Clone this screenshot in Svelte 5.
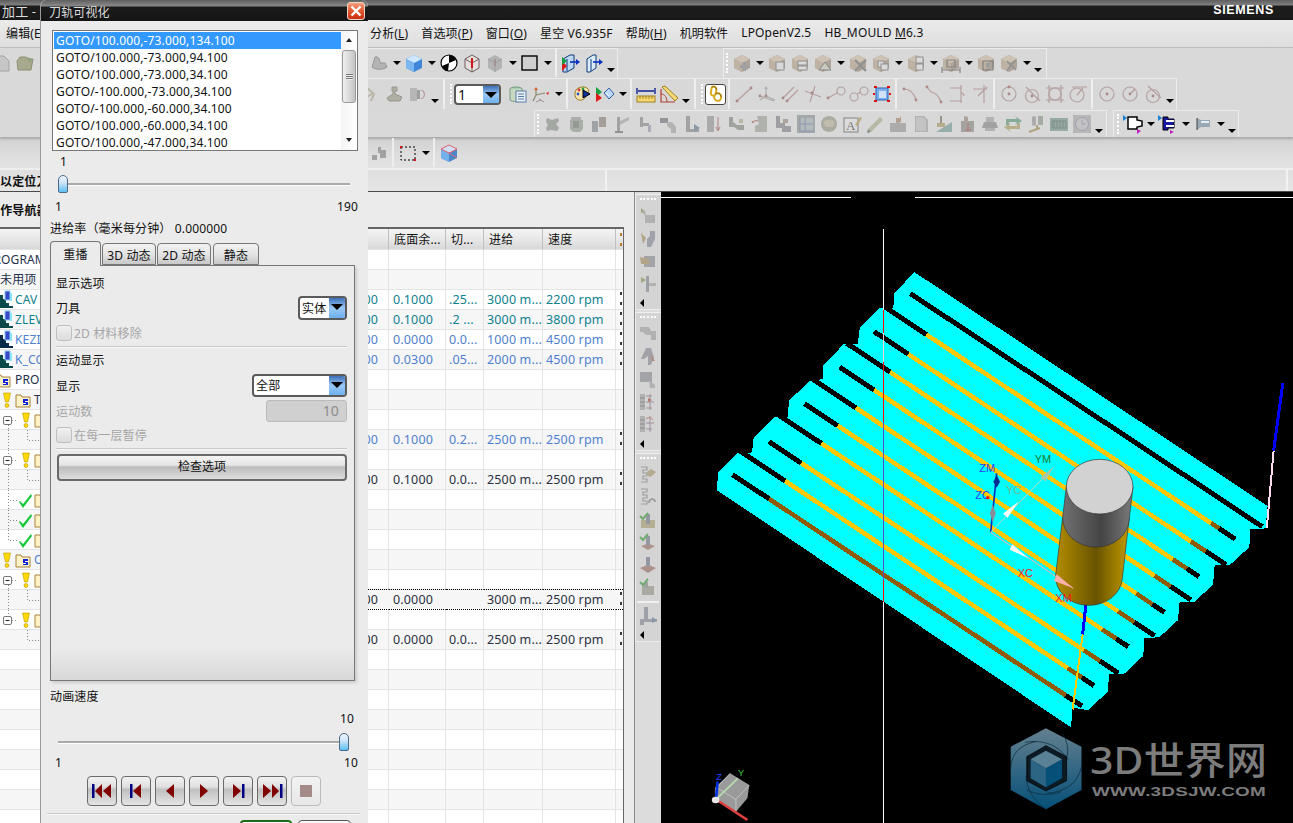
<script>
  const gray = (d, f = "#8e8e8e") => `<path d="${d}" fill="${f}"/>`;
  const cube = (t, l, r) =>
    `<path d="M10 2l8 4v9l-8 4-8-4V6z" fill="${r}"/><path d="M2 6l8-4 8 4-8 4z" fill="${t}"/><path d="M2 6l8 4v9l-8-4z" fill="${l}"/>`;
  const tan = (over) => cube("#c9baa6", "#b5a48e", "#9f9080") + over;
  const dot = (x, y) => `<circle cx="${x}" cy="${y}" r="1.4" fill="#9c6c6c"/>`;
  const ln = (d) => `<path d="${d}" fill="none" stroke="#a98a8a" stroke-width="1.2"/>`;
  const circ = (cx, cy, r) => `<circle cx="${cx}" cy="${cy}" r="${r}" fill="none" stroke="#a89090" stroke-width="1.2"/>`;

  const I = {
    doc: `<path d="M3 3h9l5 5v10H3z" fill="#c6c6c6" stroke="#a4a4a4"/>`,
    folder: `<path d="M2 8l3-4h6l2 2h5l-2 11H3z" fill="#a9a98e" stroke="#8e8e76"/><path d="M12 4l5 2-2 4z" fill="#8fa080"/>`,
    bowl: `<path d="M6 4c4-1 5 3 5 6h5l2 4c-3 3-12 3-15 0l1-3z" fill="#a6a6a6" stroke="#7d7d7d"/>`,
    bluecube: cube("#cfe8ff", "#7ab6f0", "#3f86d8"),
    sphere: `<circle cx="10" cy="10" r="8" fill="#fff" stroke="#000" stroke-width="1.2"/><path d="M10 2a8 8 0 0 1 7 5l-7 3-1 8a8 8 0 0 1-6-5l7-3z" fill="#000"/>`,
    redcube: `<path d="M10 2l7 4v9l-7 4-7-4V6z" fill="#e6dede" stroke="#6f5f5f"/><path d="M3 6l7 4 7-4M10 10v9" fill="none" stroke="#6f5f5f"/><path d="M9 5h2v10H9z" fill="#d01818"/>`,
    greycube: `<path d="M10 2l7 4v9l-7 4-7-4V6z" fill="#a6a6a6"/><path d="M10 10v9M3 6l7 4 7-4" fill="none" stroke="#8a8a8a"/><path d="M9 6h2v7H9z" fill="#8f7a7a"/>`,
    square: `<rect x="2" y="3" width="15" height="14" fill="#cfcfcf" stroke="#000" stroke-width="1.4"/>`,
    ca: `<path d="M2 6l7-4h4v13l-7 4H2z" fill="#bcd8f4" stroke="#0a3a7a"/><path d="M6 6v12" stroke="#0a3a7a"/><path d="M1 8l5 5-5 5z" fill="#e01818"/><path d="M1 4l5 4-5 4z" fill="#12a040"/><path d="M9 9h7" stroke="#0030c0" stroke-width="1.6"/><path d="M15 6l4 3-4 3z" fill="#0030c0"/>`,
    cb: `<path d="M3 6l6-4h3v13l-6 4H3z" fill="#dcecfb" stroke="#0a3a7a"/><path d="M7 6v12" stroke="#0a3a7a"/><path d="M9 9h7" stroke="#0030c0" stroke-width="1.6"/><path d="M15 6l4 3-4 3z" fill="#0030c0"/>`,
    t1: tan(`<path d="M11 9h3v3h3v3h-3v3h-3v-3H8v-3h3z" fill="#8c8c8c"/>`),
    t2: tan(`<rect x="9" y="9" width="8" height="8" fill="#d8d8d8" stroke="#777"/>`),
    t3: tan(`<rect x="8" y="8" width="9" height="4" fill="#ddd" stroke="#777"/><rect x="8" y="13" width="9" height="4" fill="#ddd" stroke="#777"/>`),
    t4: tan(`<path d="M12 9l6 8H6z" fill="#c4c4b4" stroke="#666"/>`),
    t5: tan(`<path d="M7 7l11 11M18 7L7 18" stroke="#777" stroke-width="2.4"/>`),
    t6: tan(`<rect x="7" y="8" width="6" height="6" fill="#ddd" stroke="#777"/><rect x="10" y="11" width="7" height="6" fill="#ddd" stroke="#777"/>`),
    t7: tan(`<rect x="10" y="4" width="7" height="6" fill="#ddd" stroke="#777"/><rect x="10" y="11" width="7" height="6" fill="#ddd" stroke="#777"/>`),
    t8: tan(`<path d="M1 17h18M1 14v6M19 14v6M6 7h8v7H6z" fill="none" stroke="#666" stroke-width="1.2"/>`),
    t9: tan(`<rect x="7" y="8" width="10" height="9" fill="none" stroke="#555"/><rect x="10" y="10" width="4" height="4" fill="#888"/>`),
    t10: tan(`<path d="M8 8l9 9M8 18l4-6 5-5" stroke="#777" stroke-width="1.6" fill="none"/>`),
    h1: `<path d="M5 4l7 6-3 7M3 14l7-4" fill="none" stroke="#b0a898" stroke-width="2"/>`,
    h2: `<path d="M7 3h5v4h-2v3l7 3-2 4H4l-2-3 6-4V7H7z" fill="#a0a090" stroke="#807f76"/>`,
    h3: `<rect x="2" y="4" width="7" height="13" fill="#a9a9a9"/><rect x="9" y="6" width="3" height="9" fill="#888"/><path d="M13 6c4 1 5 7 0 9" fill="none" stroke="#a88" stroke-width="1.2"/>`,
    layers: `<ellipse cx="8" cy="5" rx="6" ry="2" fill="#a8d4b4" stroke="#6a9a7a"/><path d="M2 5v11c2 2 10 2 12 0V5" fill="#c8d8c0" stroke="#7a9a8a"/><rect x="8" y="7" width="10" height="11" fill="#e8f0f8" stroke="#5878a8"/><path d="M10 10h6M10 12.500h6M10 15h6" stroke="#5878a8"/>`,
    wcs: `<path d="M5 11V4M5 11l-3 6M5 11l9-2" stroke="#8a8a70" stroke-width="1.2" fill="none"/><path d="M5 3l-2 3h4z" fill="#e06020"/><path d="M15 9l3-1-1 3z" fill="#e02020"/><path d="M8 15l5 3M5 18l5-2" stroke="#a09090"/>`,
    palette: `<path d="M3 9c0-6 10-8 13-4 2 3-1 4-2 7-1 4-7 6-10 2-1-1-1-3-1-5z" fill="#f4e6b0" stroke="#987a20"/><circle cx="7" cy="6" r="1.400" fill="#e03030"/><circle cx="11" cy="5" r="1.400" fill="#30a040"/><circle cx="6" cy="10" r="1.400" fill="#3050d0"/><path d="M11 6l7 4-7 4z" fill="#1030a0" stroke="#000"/>`,
    viewset: `<path d="M9 9l5-5 5 6-5 5z" fill="#bcd8f4" stroke="#3060a8"/><path d="M1 3l6 5-6 5z" fill="#18a040"/><path d="M1 9l6 5-6 4z" fill="#e01818"/><path d="M11 9l3 3" stroke="#fff"/>`,
    ruler: `<path d="M1 4v6M19 4v6M2 7h16" stroke="#102090" stroke-width="1.4" fill="none"/><rect x="1" y="12" width="18" height="6" fill="#f6d870" stroke="#a08020"/><path d="M4 12v3M7 12v3M10 12v3M13 12v3M16 12v3" stroke="#a08020"/>`,
    angle: `<path d="M2 5v13h14" fill="none" stroke="#b04030" stroke-width="1.2"/><path d="M2 10c4 0 6 4 6 8" fill="none" stroke="#b04030"/><path d="M3 3l3-1 13 12-3 3z" fill="#f4d878" stroke="#a08020"/>`,
    l1: ln("M3 17L17 4") + dot(3, 17) + dot(17, 4),
    l2: `<path d="M9 3v9M9 12l9 4M9 12l-6 4M3 12l14 5" fill="none" stroke="#a09a9a" stroke-width="1.2"/><path d="M9 2l-2 3h4z" fill="#a0a0a0"/>` + dot(9, 12) + dot(3, 12),
    l3: ln("M3 14L14 3M7 17L18 6") + dot(3, 14) + dot(7, 17),
    l4: ln("M2 7l16 6M12 2L7 18") + dot(9, 9),
    l5: ln("M2 14l9-5") + circ(15, 7, 4) + dot(2, 14),
    l6: circ(5, 13, 4) + circ(15, 7, 4) + ln("M8 10l4-2"),
    l7: `<rect x="4" y="4" width="12" height="12" fill="#7ab0f0" stroke="#3060b0"/><rect x="7" y="7" width="7" height="7" fill="#cfe2f8"/><path d="M2 3h3M15 3h3M2 17h3M15 17h3M1 10h2M17 10h2" stroke="#e01010" stroke-width="1.800"/>`,
    a1: ln("M3 5c6 0 10 4 12 11") + dot(3, 5) + dot(15, 16),
    a2: ln("M3 3l4 5c5 1 8 4 10 10") + dot(3, 3) + dot(17, 18),
    a3: ln("M3 4h12M3 17h12M14 1v18M14 9c2 0 3 1 3 3"),
    a4: ln("M3 5h14M14 1v18M8 12l9-9"),
    c1: circ(10, 10, 7) + dot(10, 10) + dot(10, 3),
    c2: circ(10, 12, 6.500) + dot(10, 12) + ln("M4 3l14 14"),
    c3: ln("M1 4h18M1 16h18M4 1v18M16 1v18") + circ(10, 10, 6),
    c4: circ(9, 11, 7) + ln("M9 11l6-7M4 3h15"),
    c5: circ(10, 10, 7) + dot(10, 10),
    c6: circ(10, 10, 7) + dot(10, 10) + ln("M10 10l5-5"),
    c7: circ(10, 12, 6.500) + dot(10, 12) + ln("M5 2l13 12"),
    r1: gray("M4 4l5 2 6-2 1 3-3 3 3 4-2 3-6-1-4 1-1-3 2-3-2-3z", "#8f9690"),
    r2: gray("M5 3h10v3h2v9l-3 3H7l-3-3V6h1z", "#98a096") + gray("M7 7h6v7H7z", "#7c827a"),
    r3: gray("M3 7h6v11H3z", "#8a8f96") + gray("M10 3h7v10h-7z", "#8f8a80"),
    r4: gray("M5 3h3v15H5z") + gray("M8 7l9-4v3l-9 5z", "#a8a8a8") + gray("M3 17h8v2H3z", "#777"),
    r5: gray("M5 3h3v10H5zM8 9h6v3H8z") + gray("M13 11h3v7h-3z", "#9aa0a8"),
    r6: gray("M2 4h8v5H2z", "#7c7c84") + gray("M9 8h5l4 5v6h-5v-4l-4-3z", "#a6a6a6"),
    r7: gray("M5 2h4v13h9v3H5z") + gray("M13 10l6 4-6 4z", "#6f7f90"),
    r8: gray("M3 2h7v16H3z", "#999") + gray("M3 6l7-4M3 12l7-6M3 18l7-6", "#777") + `<path d="M14 3v13M12 13l2 4 2-4" stroke="#a06060" fill="none"/>`,
    r9: gray("M2 3h4v5l4 3h7v5h-6l-4-3H2z", "#8a8f88") + gray("M12 5h4v4h-4z", "#b0a898"),
    r10: gray("M7 2h10v16H5v-6l4-2z", "#a0a49c") + `<path d="M3 9c0-2 3-3 5-2M3 9l-1-2" stroke="#a05040" fill="none"/>`,
    r11: gray("M3 2h4v7h5v3h6v6H9v-4H3z", "#8a8a90") + gray("M10 5h5v4h-5z", "#9a8f86"),
    r12: gray("M1 1h18v18H1z", "#8f9696") + gray("M4 4h13v13H4z", "#a8b0b4") + `<path d="M4 4v13h13M9 4v13M4 10h13" stroke="#7480a0" fill="none"/>`,
    r13: `<circle cx="10" cy="10" r="8" fill="#9a9a8e"/><path d="M4 8c3-3 10-3 12 0l-2 5H7z" fill="#b8b09c"/>`,
    r14: `<rect x="2" y="4" width="14" height="14" fill="#dedede" stroke="#666"/><text x="4" y="16" font-size="13" font-family="Liberation Serif" fill="#555">A</text><path d="M13 11l5-8 2 1-5 8z" fill="#b09a60"/>`,
    r15: gray("M3 15L15 3l3 3L6 18z", "#a8ac90") + gray("M3 15l3 3-4 1z", "#607068"),
    r16: gray("M2 9h6V4h4v5h6v9H2z", "#9c9c9c") + gray("M8 4h4l1-2v6H8z", "#a88870"),
    r17: gray("M4 2h9l4 4v12H4z", "#a4a4a4") + gray("M5 3h7l3 3v11H5z", "#bcbcbc"),
    r18: gray("M2 18L18 8v10z", "#7fa09a") + gray("M6 2h2v7H6z", "#80786c") + gray("M3 9h8v4H3z", "#a89c6c"),
    r19: gray("M4 7h13v11H4z", "#8f8f8a") + gray("M7 2l4 1v5H7z", "#9c9080") + `<path d="M11 9v7M8 16h6" stroke="#b05050"/>`,
    r20: gray("M4 8h12l2 6H2z", "#8c8c8c") + gray("M6 3h8v5H6zM5 14h10v3H5z", "#a4a4a4"),
    r21: gray("M3 5h11l-2-3 7 5-7 4 2-3H6v3H3z", "#6a9a80") + gray("M17 15H6l2 3-7-5 7-4-2 3h8V9h3z", "#a8a070"),
    r22: `<rect x="6" y="2" width="4" height="10" fill="#9a9a9a" rx="2"/><rect x="12" y="2" width="5" height="9" fill="#8f9a8f"/><path d="M3 18l11-4M11 11v4" stroke="#a09060" stroke-width="2"/>`,
    r23: `<rect x="1" y="4" width="18" height="13" fill="#7e9a90"/><path d="M3 7h14v7H3zM5 7v7M8 7v7M11 7v7M14 7v7" stroke="#5c7068" fill="none"/>`,
    r24: `<rect x="1" y="1" width="18" height="18" fill="#a9a9a9"/><circle cx="10" cy="10" r="6.500" fill="#bbb" stroke="#8a8ca8"/><path d="M10 6v4h4" stroke="#8a8ca8" fill="none"/>`,
    sw1: `<path d="M5 3h9v3l5 1v5l-5 1v2H5z" fill="#fff" stroke="#000" stroke-width="1.500"/><path d="M0 1l4 3-4 3z" fill="#1a80d0"/><path d="M14 15l4 2-4 3z" fill="#c020c0"/>`,
    sw2: `<path d="M5 3h5v2h6v9h-6v2H5z" fill="#1818a0" stroke="#000"/><path d="M8 6h8v2H8zM8 11h8v2H8z" fill="#fff"/><path d="M0 1l4 3-4 3z" fill="#1a80d0"/><path d="M12 16l4 2-4 2z" fill="#c020c0"/>`,
    sw3: `<path d="M4 4l4 2h9v7H8l-4 3z" fill="#9aa8b4"/><path d="M8 7h8v2H8z" fill="#e4ecf4"/><path d="M4 4v12" stroke="#444"/>`,
    r4a: gray("M3 12h5v5H3zM9 4h3v3h5v8h-6v-5H9z", "#8c8c8c"),
    marq: `<rect x="3" y="4" width="14" height="13" fill="none" stroke="#000" stroke-dasharray="2 2"/><rect x="2" y="3" width="2" height="2" fill="#e01010"/><rect x="16" y="16" width="2" height="2" fill="#e01010"/>`,
    hcube: cube("#cfe2f6", "#74b0ea", "#4a88cc") + `<path d="M10 2l8 4-8 4-8-4zM10 10l8 5" fill="none" stroke="#e86070"/>`,
    p1: gray("M3 3l4 2 1 4h9v8H7V9L3 6z", "#a4a4a4") + gray("M3 2l3 3-3 2z", "#8a9460"),
    p2: gray("M12 2h5v8l-4 8H9V10l3-3z", "#8c9098") + gray("M3 4l5 5-3 6z", "#a09468"),
    p3: gray("M6 5h11v11H6z", "#8f9298") + gray("M2 6l9 2v5H3z", "#a8946c"),
    p4: gray("M8 2h3v16H8z", "#8a8e96") + gray("M11 9h7v3h-7z", "#a6a6a6") + gray("M3 3l5 3-5 3z", "#8f9a60"),
    p5: gray("M2 3h9l2 4h5v9h-5v-5H8L5 8H2z", "#a4a4a4"),
    p6: gray("M8 1h5l3 9-3 8h-3V9L6 12H3z", "#8f9098") + gray("M13 8l4 6h-3z", "#a46a5a"),
    p7: gray("M2 3h12v10H2z", "#8f9298") + gray("M11 11l6 5v3h-5z", "#a6a6a6"),
    p8: `<path d="M2 2h5v16H2z" fill="#a4a4a4"/><path d="M2 6h5M2 10h5M2 14h5" stroke="#777"/><path d="M8 4h6M8 10h8M8 16h6M12 2v16" stroke="#8a7a8a" fill="none"/><path d="M10 6l4 2-4 2z" fill="#b05a40"/>`,
    p9: `<path d="M2 2h5v16H2z" fill="#a4a4a4"/><path d="M2 6h5M2 10h5M2 14h5" stroke="#777"/><path d="M12 2v16M8 9h8M8 15h6" stroke="#8a7a8a" fill="none"/><path d="M8 5c2-2 5-2 7 1" stroke="#b05a40" fill="none"/>`,
    p10: `<path d="M3 2h6v3H5v3h4v3H5v3h4v3H3" fill="none" stroke="#8a8a8a" stroke-width="1.200"/>` + gray("M9 7l4-3 5 3-3 3-3 2-3-2z", "#a89a78"),
    p11: `<path d="M3 2h6v3H5v3h4v3H5v3h4v3H3" fill="none" stroke="#8a8a8a" stroke-width="1.200"/><path d="M11 16c0-5 6-5 6-1" fill="none" stroke="#888" stroke-width="1.800"/>`,
    p12: gray("M3 10h14v8H3z", "#a8a27c") + gray("M8 4h4v10H8z", "#7c8290") + `<path d="M2 6l3 3 5-6" stroke="#4c9a4c" stroke-width="2" fill="none"/>`,
    p13: gray("M3 14l6-2h2l6 2-7 4z", "#9c7a70") + gray("M8 4h4v9H8z", "#7c8290") + `<path d="M2 5l3 3 5-6" stroke="#4c9a4c" stroke-width="2" fill="none"/>`,
    p14: gray("M2 13l7-3h2l7 3-8 5z", "#9c7a70") + gray("M8 2h4v9H8z", "#7c8290"),
    p15: gray("M4 9h12v9H4z", "#9a9a90") + gray("M6 5h4v6H6z", "#8f8f8f") + `<path d="M2 5l3 3 5-6" stroke="#4c9a4c" stroke-width="2" fill="none"/>`,
    p16: gray("M6 1h4v12h9v3H6zM2 13h4v6H2z", "#8a8e96") + gray("M14 11l5 3-5 3z", "#6f7f98"),
  };

  // disabled commands in the reference read washed out
  const faint = (t) => /^(t|r|p|a|c|h)\d+$/.test(t) || /^l[1-6]$/.test(t) || t === "bowl" || t === "greycube" || t === "r4a";

  const toolbars = [
    { cls: "r1", groups: [
      { cls: "bare", items: "doc folder" },
      { cls: "g1", items: "bowl v bluecube v sphere redcube greycube v square v | ca cb vs" },
      { cls: "g2", items: ": t1 v t2 t3 t4 v t5 t6 v t7 v t8 v t9 t10 v vs" },
    ] },
    { cls: "r2", groups: [
      { cls: "g3", items: "h1 h2 h3 vs | : combo layers wcs v | palette viewset v | ruler angle vs | : tog | l1 l2 l3 l4 l5 l6 l7 | a1 a2 a3 a4 | c1 c2 c3 c4 | c5 c6 c7 vs" },
    ] },
    { cls: "r3", groups: [
      { cls: "g4", items: ": r1 r2 r3 r4 r5 r6 r7 r8 r9 r10 r11 r12 r13 r14 r15 r16 r17 r18 r19 r20 r21 r22 r23 r24 vs" },
      { cls: "g5", items: ": sw1 v sw2 v sw3 v vs" },
    ] },
    { cls: "r4", groups: [{ cls: "g6", items: "r4a | marq v | hcube" }] },
  ];

  const palette = [
    { cls: "p-a", items: ": p1 p2 p3 p4 <" },
    { cls: "p-b", items: ": p5 p6 p7 p8 p9 <" },
    { cls: "p-c", items: ": p10 p11 p12 p13 p14 p15 - p16 <" },
  ];

  const menus = [
    { t: "分析(", u: "L", e: ")" },
    { t: "首选项(", u: "P", e: ")" },
    { t: "窗口(", u: "O", e: ")" },
    { t: "星空 V6.935F" },
    { t: "帮助(", u: "H", e: ")" },
    { t: "机明软件" },
    { t: "LPOpenV2.5" },
    { t: "HB_MOULD ", u: "M", e: "6.3" },
  ];

  // tree column pieces, everything right of x=40 sits under the dialog
  const warn = (x) => `<path d="M${x - 3.5} 3h7l-2 9h-3z" fill="#ffd800" stroke="#b89a00" stroke-width=".6"/><circle cx="${x}" cy="15.500" r="2" fill="#ffd800" stroke="#b89a00" stroke-width=".6"/>`;
  const fold = (x) => `<path d="M${x} 5h5l1 2h8v10H${x}z" fill="#fdf2c4" stroke="#a8843c"/><path d="M${x + 7} 9h5v2h-3v1h3v3h-5v-1h3v-1H${x + 7}z" fill="#1420e0"/>`;
  const minus = (x) => `<rect x="${x - 3.500}" y="6.500" width="8" height="8" rx="1.500" fill="#fff" stroke="#777"/><path d="M${x - 1.500} 10.500h4" stroke="#222"/><path d="M${x + 5} 10.500h5" stroke="#999" stroke-dasharray="1 2"/>`;
  const elbow = (x, to) => `<path d="M${x + .5} 0v10.500H${to}" fill="none" stroke="#888" stroke-dasharray="1 2"/>`;
  const spine = `<path d="M8.500 0v20" stroke="#888" stroke-dasharray="1 2"/>`;
  const check = (x) => `<path d="M${x} 11l3 3 8-10 1 2-9 12-4-6z" fill="#18c838"/>`;
  const op = (c) => `<path d="M0 5h3v4h3v4h3v3h4v2H0z" fill="${c}"/><rect x="5" y="1" width="5" height="9" fill="#3848c8" stroke="#88c8f0"/><path d="M10 3h2v8h-2z" fill="#88e8ff"/>`;
  const txt = (x, s, c) => `<text x="${x}" y="14" fill="${c}">${s}</text>`;
  const TEAL = "#0f7f90", BLUE = "#4f7fd0", DARK = "#26304a";

  const rows = [
    { tree: txt(-14, "PROGRAM", DARK) },
    { tree: txt(0, "未用项", DARK) },
    { tree: op("#0a4a4a") + txt(15, "CAV", TEAL), vals: ["00", "0.1000", ".25...", "3000 m...", "2200 rpm"], c: "teal" },
    { tree: op("#0a4a4a") + txt(15, "ZLEV", TEAL), vals: ["00", "0.1000", ".2 ...", "3000 m...", "3800 rpm"], c: "teal" },
    { tree: op("#0a2a4a") + txt(15, "KEZI", BLUE), vals: ["00", "0.0000", "0.0...", "1000 m...", "4500 rpm"], c: "blue" },
    { tree: op("#0a4a4a") + txt(15, "K_CO", BLUE), vals: ["00", "0.0300", ".05...", "2000 m...", "4500 rpm"], c: "blue" },
    { tree: fold(-4) + txt(15, "PRO", DARK) },
    { tree: warn(7) + fold(16) + txt(34, "T", DARK) },
    { tree: minus(7) + warn(26) + fold(35) + `<path d="M8.500 15v5" stroke="#888" stroke-dasharray="1 2"/>` },
    { tree: spine + elbow(27, 40), vals: ["00", "0.1000", "0.2...", "2500 m...", "2500 rpm"], c: "blue" },
    { tree: minus(7) + warn(26) + fold(35) + `<path d="M8.500 0v6M8.500 15v5" stroke="#888" stroke-dasharray="1 2"/>` },
    { tree: spine + elbow(27, 40), vals: ["00", "0.1000", "0.0...", "2500 m...", "2500 rpm"], c: "dark" },
    { tree: elbow(8, 18) + spine + check(20) + fold(35) },
    { tree: spine + check(20) + fold(35) + elbow(8, 18) },
    { tree: elbow(8, 18) + check(20) + fold(35) },
    { tree: warn(7) + fold(16) + txt(34, "O", BLUE) },
    { tree: minus(7) + warn(26) + fold(35) + `<path d="M8.500 15v5" stroke="#888" stroke-dasharray="1 2"/>` },
    { tree: spine + elbow(27, 40), vals: ["00", "0.0000", "", "3000 m...", "2500 rpm"], c: "dark", sel: true },
    { tree: minus(7) + warn(26) + fold(35) + `<path d="M8.500 0v6" stroke="#888" stroke-dasharray="1 2"/>` },
    { tree: elbow(27, 40), vals: ["00", "0.0000", "0.0...", "2500 m...", "2500 rpm"], c: "dark" },
    ...Array.from({ length: 10 }, () => ({ tree: "" })),
  ];

  const gotos = [
    "GOTO/100.000,-73.000,134.100",
    "GOTO/100.000,-73.000,94.100",
    "GOTO/100.000,-73.000,34.100",
    "GOTO/-100.000,-73.000,34.100",
    "GOTO/-100.000,-60.000,34.100",
    "GOTO/100.000,-60.000,34.100",
    "GOTO/100.000,-47.000,34.100",
  ];

  const tabs = ["重播", "3D 动态", "2D 动态", "静态"];

  const transport = [
    `<path d="M5 8h2.500v14H5z" fill="#000080"/><path d="M15 8v14l-7-7zM24 8v14l-8-7z" fill="#800000"/>`,
    `<path d="M9 8h2.500v14H9z" fill="#000080"/><path d="M20 8v14l-8-7z" fill="#800000"/>`,
    `<path d="M19 8v14l-8-7z" fill="#800000"/>`,
    `<path d="M11 8v14l8-7z" fill="#800000"/>`,
    `<path d="M10 8v14l8-7z" fill="#800000"/><path d="M19 8h2.500v14H19z" fill="#000080"/>`,
    `<path d="M6 8v14l8-7zM15 8v14l7-7z" fill="#800000"/><path d="M23 8h2.500v14H23z" fill="#000080"/>`,
    `<rect x="9" y="9" width="12" height="12" fill="#a58a8a"/>`,
  ];

  // toolpath drawn in the coordinates of the reference crop, see the group transform
  const SLOPE = 0.749;
  const K = "#000", O = "#ffc800", B = "#8f5a00";
  const cuts = [
    [620, 290, [[620, 1492, K]]],
    [660, 405, [[548, 660, K], [660, 1365, O], [1365, 1385, B], [1385, 1425, K]]],
    [615, 460, [[530, 615, K], [615, 1315, O], [1315, 1352, B], [1352, 1402, K]]],
    [570, 510, [[462, 570, K], [570, 1270, O], [1270, 1305, B], [1305, 1335, K]]],
    [530, 560, [[445, 530, K], [530, 1225, O], [1225, 1265, B], [1265, 1315, K]]],
    [485, 610, [[375, 485, K], [485, 1180, O], [1180, 1220, B], [1220, 1250, K]]],
    [440, 660, [[358, 440, K], [440, 1135, O], [1135, 1175, B], [1175, 1225, K]]],
    [400, 710, [[290, 400, K], [400, 1095, O], [1095, 1130, B], [1130, 1160, K]]],
    [350, 765, [[270, 350, K], [350, 1050, O], [1050, 1090, B], [1090, 1135, K]]],
    [310, 815, [[198, 310, K], [310, 1010, O], [1010, 1045, B], [1045, 1075, K]]],
    [270, 865, [[180, 270, K], [270, 1005, B], [1005, 1045, K]]],
  ].flatMap(([x0, y0, segs]) =>
    segs.map(([a, b, c]) => ({
      x1: a, y1: y0 + (a - x0) * SLOPE, x2: b, y2: y0 + (b - x0) * SLOPE, c,
      w: c === K ? 5 : 4.6,
    }))
  );
  const outline = "630,230 1505,885 1500,948 1462,950 1460,1000 1412,1050 1374,1050 1370,1105 1325,1153 1287,1155 1283,1205 1237,1253 1200,1255 1197,1305 1150,1355 1112,1355 1110,1405 1060,1457 1022,1450 1018,1505 140,840 145,790 192,738 228,735 232,695 282,637 316,635 320,590 370,535 403,530 405,490 455,432 490,430 495,385 545,330 578,330 580,290";
</script>

{#snippet cells(items)}
  {#each items.split(" ") as t}
    {#if t === "|"}<span class="sp"></span>
    {:else if t === "v"}<span class="dr"></span>
    {:else if t === "vs"}<span class="dr low"></span>
    {:else if t === ":"}<span class="gr"></span>
    {:else if t === "<"}<span class="back"></span>
    {:else if t === "-"}<span class="hr"></span>
    {:else if t === "combo"}<span class="combo tb-combo"><span class="combo-v">1</span><span class="combo-b"></span></span>
    {:else if t === "tog"}
      <span class="tog">
        <svg viewBox="0 0 20 20" width="20" height="20"><path d="M6 3c3-2 5 0 5 3l-1 4c-1 3-5 2-5-1zM10 10c3-2 6 0 6 3s-2 5-5 4-3-5-1-7z" fill="none" stroke="#d8a818" stroke-width="2"/><path d="M6 3c3-2 5 0 5 3M10 10c3-2 6 0 6 3" fill="none" stroke="#806010"/></svg>
      </span>
    {:else}<span class="ic" class:faint={faint(t)}><svg viewBox="0 0 20 20" width="20" height="20">{@html I[t]}</svg></span>
    {/if}
  {/each}
{/snippet}

<div class="app">
  <header class="title">
    <span class="title-t">加工 - |</span>
    <span class="brand">SIEMENS</span>
  </header>

  <nav class="menu">
    <span class="menu-first">编辑(E)</span>
    {#each menus as m}
      <span class="menu-i">{m.t}{#if m.u}<u>{m.u}</u>{m.e}{/if}</span>
    {/each}
  </nav>

  <div class="bars">
    {#each toolbars as bar}
      <div class="tb {bar.cls}">
        {#each bar.groups as g}
          <div class="tg {g.cls}">{@render cells(g.items)}</div>
        {/each}
      </div>
    {/each}
  </div>

  <div class="status">
    <b>以定位刀具</b>
    <i class="st-a"></i>
    <i class="st-b"></i>
  </div>

  <main class="main">
    <section class="nav">
      <h2>操作导航器</h2>
      <div class="grid">
        <div class="row head">
          <span class="c t"></span><span class="c"></span>
          <span class="c">底面余...</span><span class="c">切...</span><span class="c">进给</span><span class="c">速度</span>
          <span class="c end"><i class="mk or"></i><i class="mk or"></i></span>
        </div>
        {#each rows as r}
          <div class="row {r.c ?? ''}" class:sel={r.sel}>
            <span class="c t"><svg width="41" height="20">{@html r.tree}</svg></span>
            <span class="c first">{r.vals?.[0] ?? ""}</span>
            <span class="c">{r.vals?.[1] ?? ""}</span>
            <span class="c">{r.vals?.[2] ?? ""}</span>
            <span class="c">{r.vals?.[3] ?? ""}</span>
            <span class="c">{r.vals?.[4] ?? ""}</span>
            <span class="c end">{#if r.vals}<i class="mk"></i><i class="mk"></i>{/if}</span>
          </div>
        {/each}
      </div>
    </section>

    <aside class="pal">
      {#each palette as p}
        <div class="pg {p.cls}">{@render cells(p.items)}</div>
      {/each}
    </aside>

    <div class="view">
      <svg class="scene" viewBox="661 192 632 631" width="632" height="631">
        <path d="M661 197.500h190M915 197.500h378" stroke="#fff"/>
        <g transform="translate(660 190) scale(.4037 .357)" shape-rendering="crispEdges">
          <polygon points={outline} fill="#00ffff"/>
          {#each cuts as s}
            <line x1={s.x1} y1={s.y1} x2={s.x2} y2={s.y2} stroke={s.c} stroke-width={s.w} vector-effect="non-scaling-stroke"/>
          {/each}
          <line x1="1543" y1="540" x2="1520" y2="730" stroke="#0000ff" stroke-width="3" vector-effect="non-scaling-stroke"/>
          <line x1="1520" y1="730" x2="1503" y2="948" stroke="#ffdcf0" stroke-width="2" vector-effect="non-scaling-stroke"/>
          <line x1="1047" y1="1245" x2="1022" y2="1455" stroke="#ffc800" stroke-width="2" vector-effect="non-scaling-stroke"/>
          <line x1="1055" y1="1160" x2="1047" y2="1245" stroke="#0000ff" stroke-width="3" vector-effect="non-scaling-stroke"/>
        </g>

        <path d="M883.500 229V310" stroke="#fff"/>
        <path d="M883.500 310V333" stroke="#f01010"/>
        <path d="M883.500 333V362" stroke="#f4d0d0"/>
        <path d="M883.500 362V422" stroke="#f01010"/>
        <path d="M883.500 422V580" stroke="#5a50d0"/>
        <path d="M883.500 580V602" stroke="#f01010"/>
        <path d="M883.500 602V823" stroke="#fff"/>

        <defs>
          <linearGradient id="gold" x1="0" x2="1" y1="0" y2="0">
            <stop offset="0" stop-color="#b38c00"/><stop offset=".55" stop-color="#685400"/><stop offset="1" stop-color="#c29a00"/>
          </linearGradient>
          <linearGradient id="steel" x1="0" x2="1" y1="0" y2="0">
            <stop offset="0" stop-color="#707070"/><stop offset=".55" stop-color="#444"/><stop offset="1" stop-color="#7c7c7c"/>
          </linearGradient>
          <linearGradient id="hexfill" x1="0" x2="0" y1="0" y2="1">
            <stop offset="0" stop-color="#64808f"/><stop offset="1" stop-color="#054f78"/>
          </linearGradient>
        </defs>

        <g transform="translate(950 430) scale(.3333)">
          <path d="M338 262L317 435A100 86 0 0 0 517 445L538 262Z" fill="url(#gold)" stroke="#333" stroke-width="2"/>
          <path d="M349 170L338 262A100 88 0 0 0 538 265L549 170Z" fill="url(#steel)" stroke="#333" stroke-width="2"/>
          <ellipse cx="449" cy="170" rx="100" ry="82" fill="#d2d2d2" stroke="#333" stroke-width="2"/>
          <line x1="122" y1="307" x2="140" y2="130" stroke="#0030c0" stroke-width="5"/>
          <path d="M140 135l10 20-10 18-10-18z" fill="#002a90"/>
          <path d="M128 222l9 28-9 28-8-28z" fill="#8c8c98"/>
          <line x1="122" y1="307" x2="310" y2="112" stroke="#c8d8c0" stroke-width="3"/>
          <path d="M310 112l-24 42-14-12z" fill="#a8c8a8"/>
          <path d="M205 215l-32 48-14-12z" fill="#fff"/>
          <line x1="122" y1="307" x2="370" y2="475" stroke="#f8b0b8" stroke-width="3"/>
          <path d="M235 385l-56-26 8-16z" fill="#fff"/>
          <path d="M370 475l-58-22 8-20z" fill="#f8b0a8"/>
          <g class="axlbl">
            <text x="88" y="127" fill="#2040ff">ZM</text>
            <text x="254" y="100" fill="#1f7a1f">YM</text>
            <text x="168" y="192" fill="#68b890">YC</text>
            <text x="76" y="208" fill="#2040ff">ZC</text>
            <text x="203" y="440" fill="#f02020">XC</text>
            <text x="316" y="515" fill="#f02020">XM</text>
          </g>
          <circle cx="113" cy="203" r="5" fill="#f01010"/>
        </g>

        <g transform="translate(690 710) scale(.3827 .3333)">
          <path d="M105 190l50 35-5 40-30 40-55-40v-32z" fill="#9a9a9a"/>
          <path d="M105 190l-35 43 50 35 35-43M120 268l0 37" fill="none" stroke="#cfcfcf" stroke-width="2"/>
          <line x1="68" y1="268" x2="72" y2="215" stroke="#0030e0" stroke-width="7"/>
          <line x1="68" y1="268" x2="125" y2="205" stroke="#b8d8b0" stroke-width="5"/>
          <line x1="68" y1="268" x2="150" y2="330" stroke="#e04040" stroke-width="7"/>
          <circle cx="67" cy="270" r="10" fill="#e8e8e8"/>
          <text x="68" y="210" class="tri" fill="#2040ff">Z</text>
          <text x="125" y="198" class="tri" fill="#40c040">Y</text>
        </g>

        <g transform="translate(690 710) scale(.3827 .3333)">
          <polygon points="930,55 1023,110 1023,240 930,298 838,240 838,110" fill="url(#hexfill)"/>
          <path d="M875 97c50-10 90 10 112 52M1023 170c-10 50-40 75-90 80M930 298c-30-25-52-60-52-102M838 180c0-50 25-75 65-85M975 73c15 30 15 60 5 85M880 240c25 15 60 18 90 5" fill="none" stroke="#0b2a3c" stroke-width="2"/>
          <polygon points="930,107 984,140 984,212 930,243 880,212 880,140" fill="#0c1a24" stroke="#000" stroke-width="2"/>
          <polygon points="930,175 972,148 972,205 930,232" fill="#045078"/>
          <polygon points="930,175 890,148 890,205 930,232" fill="#2c6484"/>
          <polygon points="930,122 972,148 930,175 890,148" fill="#5a8296"/>
        </g>
        <text x="1090" y="774" class="wm" textLength="177" lengthAdjust="spacingAndGlyphs">3D世界网</text>
        <text x="1092" y="796" class="wm2" textLength="174" lengthAdjust="spacingAndGlyphs">WWW.3DSJW.COM</text>
      </svg>
    </div>
  </main>

  <div class="dlg">
    <div class="dlg-bar">
      <span>刀轨可视化</span>
      <span class="x">
        <svg viewBox="0 0 12 12" width="12" height="12"><path d="M1.500 1.500l9 9M10.500 1.500l-9 9" stroke="#fff" stroke-width="2.400"/></svg>
      </span>
    </div>
    <div class="dlg-body">
      <div class="list">
        <div class="list-items">
          {#each gotos as g, i}
            <div class="li" class:on={i === 0}>{g}</div>
          {/each}
        </div>
        <div class="sb">
          <span class="sb-up"></span>
          <span class="sb-thumb"><i></i><i></i><i></i></span>
          <span class="sb-dn"></span>
        </div>
      </div>

      <div class="val v1">1</div>
      <div class="slider s1"><span class="thumb"></span></div>
      <div class="ends"><span>1</span><span>190</span></div>
      <div class="feed">进给率（毫米每分钟） 0.000000</div>

      <div class="tabs">
        {#each tabs as t, i}
          <span class="tab t{i}" class:on={i === 0}>{t}</span>
        {/each}
      </div>
      <div class="panel">
        <div class="lab f1">显示选项</div>
        <div class="line l1">
          <span>刀具</span>
          <span class="combo c-a"><span class="combo-v">实体</span><span class="combo-b"></span></span>
        </div>
        <div class="chk c1"><i></i><span>2D 材料移除</span></div>
        <hr />
        <div class="lab f2">运动显示</div>
        <div class="line l2">
          <span>显示</span>
          <span class="combo c-b"><span class="combo-v">全部</span><span class="combo-b"></span></span>
        </div>
        <div class="line l3">
          <span class="off">运动数</span>
          <span class="num">10</span>
        </div>
        <div class="chk c2"><i></i><span>在每一层暂停</span></div>
        <hr />
        <button class="wide">检查选项</button>
      </div>

      <div class="lab speed">动画速度</div>
      <div class="val v2">10</div>
      <div class="slider s2"><span class="thumb"></span></div>
      <div class="ends e2"><span>1</span><span>10</span></div>
      <div class="media">
        {#each transport as t, i}
          <button class="mb" class:dis={i === 6}><svg viewBox="0 0 30 30" width="30" height="30">{@html t}</svg></button>
        {/each}
      </div>
      <hr class="foot" />
      <div class="ok">
        <button class="okb green"></button>
        <button class="okb"></button>
      </div>
    </div>
  </div>
</div>

<style>
  :global(body) {
    margin: 0;
  }

  .app {
    position: relative;
    width: 1293px;
    height: 823px;
    overflow: hidden;
    background: #dedede;
    font: 12px "Noto Sans", "Noto Sans CJK SC", sans-serif;
    color: #111;
    letter-spacing: 0.15px;
  }

  .title {
    height: 20px;
    box-sizing: border-box;
    background: linear-gradient(#5d5d5d, #808080 5px, #1c1c1c 6px, #1a1a1a 19px, #111);
    display: flex;
    justify-content: space-between;
    align-items: center;
    color: #ddd;
    padding: 0 19px 0 2px;
  }

  .title-t {
    font-size: 13px;
  }

  .brand {
    font: bold 12.5px "Liberation Sans", sans-serif;
    color: #fff;
    letter-spacing: 0.65px;
    margin-top: -1px;
  }

  .menu {
    height: 28px;
    background: linear-gradient(#ebebeb, #dedede);
    border-bottom: 1px solid #bdbdbd;
    box-sizing: border-box;
    display: flex;
    align-items: center;
    gap: 13px;
    padding: 0 0 2px 6px;
  }

  .menu-first {
    width: 351px;
  }

  .bars {
    background: #d9d9d9;
  }

  .tb {
    display: flex;
  }

  .tg {
    display: flex;
    align-items: center;
    background: #d8d8d8;
    box-shadow: inset 1px 1px #ececec, inset -1px 0 #ececec;
    height: 100%;
  }

  .r1 {
    height: 30px;
    margin-left: -10px;
  }

  .r2 {
    height: 32px;
  }

  .r3 {
    height: 27px;
    box-shadow: 0 2px 2px #aaa;
    position: relative;
  }

  .r4 {
    height: 31px;
    background: linear-gradient(#d0d0d0, #dedede 60%, #e2e2e2);
  }

  .bare {
    background: none;
    box-shadow: none;
    margin-right: 331px;
  }

  .g1 {
    padding-right: 1px;
  }

  .g2 {
    margin-left: 105px;
    padding-right: 3px;
  }

  .g3 {
    margin-left: 360px;
    padding-right: 1px;
  }

  .g4 {
    margin-left: 534px;
    padding-right: 2px;
  }

  .g5 {
    margin-left: 6px;
    padding: 0 1px;
  }

  .g6 {
    margin-left: 367px;
    background: none;
    box-shadow: none;
  }

  .ic {
    width: 23px;
    flex: none;
    display: flex;
    justify-content: center;
  }

  .ic.faint svg {
    opacity: 0.72;
  }

  .sp {
    width: 6px;
    align-self: stretch;
    flex: none;
    position: relative;
  }

  .sp::after {
    content: "";
    position: absolute;
    left: 2px;
    top: 1px;
    bottom: 1px;
    width: 2px;
    background: #eeeeee;
  }

  .dr {
    width: 12px;
    height: 20px;
    flex: none;
    position: relative;
  }

  .dr::after {
    content: "";
    position: absolute;
    left: 3px;
    top: 8px;
    border: 4px solid transparent;
    border-top: 4px solid #000;
    border-bottom: 0;
  }

  .dr.low::after {
    left: 2px;
    top: 15px;
  }

  .gr {
    width: 7px;
    height: 20px;
    flex: none;
    box-sizing: border-box;
    border-left: 2px dotted #fff;
    margin-left: 3px;
    margin-right: -3px;
  }

  .combo {
    display: inline-flex;
    box-sizing: border-box;
    border: 2px solid #5a5a5a;
    border-radius: 4px;
    background: #fff;
    overflow: hidden;
  }

  .tb-combo {
    width: 47px;
    height: 21px;
    margin-right: 5px;
    font-size: 14px;
    line-height: 17px;
  }

  .combo-v {
    flex: 1;
    min-width: 0;
    padding-left: 2px;
    align-self: center;
    white-space: nowrap;
  }

  .combo-b {
    width: 16px;
    flex: none;
    position: relative;
    background: linear-gradient(#3c6fb8, #9ac8f4 50%, #6cb0ee);
  }

  .combo-b::after {
    content: "";
    position: absolute;
    left: 2px;
    top: 6px;
    border: 6px solid transparent;
    border-top: 6px solid #000;
    border-bottom: 0;
  }

  .tog {
    width: 21px;
    height: 21px;
    flex: none;
    display: flex;
    align-items: center;
    justify-content: center;
    box-sizing: border-box;
    background: #fff;
    border: 1px solid #444;
    border-radius: 3px;
  }

  .status {
    height: 24px;
    box-sizing: border-box;
    background: linear-gradient(#dfdfdf, #e6e6e6);
    border-top: 2px solid #eeeeee;
    border-bottom: 1px solid #4a4a4a;
    position: relative;
    display: flex;
    align-items: center;
    white-space: nowrap;
  }

  .st-a,
  .st-b {
    position: absolute;
    top: 0;
    bottom: 0;
    width: 2px;
    background: #f2f2f2;
  }

  .st-a {
    left: 605px;
  }

  .st-b {
    left: 1286px;
  }

  .main {
    display: flex;
    height: 631px;
  }

  .nav {
    width: 635px;
    flex: none;
    background: #ebebeb;
    border-right: 1px solid #8a8a8a;
    box-sizing: border-box;
  }

  .nav h2 {
    margin: 0 0 0 -12px;
    font-size: 12px;
    font-weight: bold;
    height: 35px;
    line-height: 38px;
  }

  .grid {
    width: 624px;
    box-sizing: border-box;
    border-top: 2px solid #666;
    border-right: 1px solid #666;
    background: #fff;
  }

  .row {
    display: grid;
    grid-template-columns: 41px 348px 57px 38px 59px 73px 7px;
    height: 20px;
    line-height: 19px;
    white-space: nowrap;
  }

  .row:nth-child(even) {
    background: #fff;
  }

  .row:nth-child(odd) {
    background: #f6f6f6;
  }

  .c {
    box-sizing: border-box;
    border-right: 1px solid #e4e4e4;
    border-bottom: 1px solid #e4e4e4;
    padding-left: 3px;
    overflow: hidden;
    font-size: 12.5px;
  }

  .c:nth-child(3) {
    padding-left: 4px;
  }

  .c.t {
    padding: 0;
    border-right: 0;
    font-size: 12px;
  }

  .c.t svg {
    display: block;
  }

  .c.first {
    text-align: right;
    padding-right: 10px;
  }

  .c.end {
    border-right: 0;
    padding: 2px 0 0 4px;
    display: flex;
    flex-direction: column;
    gap: 7px;
  }

  .mk {
    width: 2px;
    height: 3px;
    background: #3a3a3a;
    display: block;
  }

  .mk.or {
    background: #b87830;
  }

  .teal {
    color: #0f7f90;
  }

  .blue {
    color: #4f7fd0;
  }

  .dark {
    color: #2b3040;
  }

  .row.head {
    height: 21px;
    background: linear-gradient(#f4f4f4, #e6e6e6 55%, #d6d6d6);
    line-height: 21px;
  }

  .head .c {
    border-right-color: #c0c0c0;
    border-bottom-color: #e4e4e4;
    font-size: 12px;
    padding-left: 5px;
  }

  .head .c.end {
    padding: 4px 0 0 4px;
  }

  .row.sel {
    margin-top: -1px;
    height: 21px;
  }

  .sel .c:not(.t) {
    border-top: 1px dotted #000;
    border-bottom: 1px dotted #000;
    border-right-color: transparent;
  }

  .sel .c.t {
    margin-top: 1px;
  }

  .pal {
    width: 26px;
    flex: none;
    background: #dcdcdc;
    display: flex;
    flex-direction: column;
    padding-top: 2px;
    gap: 2px;
  }

  .pg {
    display: flex;
    flex-direction: column;
    align-items: center;
    background: #d4d4d4;
    box-shadow: inset 0 1px #f0f0f0, inset 1px 0 #ececec;
    border-bottom: 1px solid #ececec;
  }

  .pg .gr {
    width: 16px;
    height: 7px;
    border-left: 0;
    border-top: 2px dotted #fff;
    margin: 4px 0 0;
  }

  .pg .ic {
    height: 22.500px;
    align-items: center;
  }

  .back {
    height: 14px;
    width: 16px;
    position: relative;
    flex: none;
  }

  .back::after {
    content: "";
    position: absolute;
    left: 0;
    top: 4px;
    border: 4px solid transparent;
    border-right: 4px solid #000;
    border-left: 0;
  }

  .hr {
    width: 22px;
    height: 2px;
    background: #f0f0f0;
    margin: 2px 0;
    flex: none;
  }

  .view {
    flex: 1;
    background: #000;
    overflow: hidden;
  }

  .scene {
    display: block;
  }

  .axlbl text {
    font: 33px "Liberation Sans", sans-serif;
  }

  .tri {
    font: 26px "Liberation Sans", sans-serif;
  }

  .wm {
    font: 500 38px "Noto Sans", "Noto Sans CJK SC", sans-serif;
    fill: #7c7c7c;
  }

  .wm2 {
    font: 700 12.500px "Liberation Sans", sans-serif;
    fill: #7c7c7c;
  }

  .dlg {
    position: absolute;
    left: 40px;
    top: 0;
    width: 328px;
    height: 860px;
    box-sizing: border-box;
    border-left: 1px solid #9a9a9a;
    border-radius: 6px 6px 0 0;
    background: #ebebeb;
    overflow: hidden;
  }

  .dlg-bar {
    height: 21px;
    box-sizing: border-box;
    padding-left: 8px;
    display: flex;
    align-items: center;
    justify-content: space-between;
    background: linear-gradient(#5f5f5f, #8a8a8a 6px, #1c1c1c 7px, #141414);
    color: #dcdcdc;
    padding-top: 3px;
  }

  .x {
    width: 18px;
    height: 18px;
    margin: -3px 3px 0 0;
    display: flex;
    align-items: center;
    justify-content: center;
    box-sizing: border-box;
    background: linear-gradient(#f4a080, #e05830 50%, #c83010);
    border: 1px solid #e8d8c8;
    border-radius: 3px;
  }

  .dlg-body {
    padding: 9px 0 0 9px;
  }

  .list {
    margin-left: 2px;
    width: 306px;
    height: 121px;
    box-sizing: border-box;
    border: 1px solid #777;
    background: #fff;
    display: flex;
  }

  .list-items {
    width: 287px;
    padding: 1px 0 0 1px;
    overflow: hidden;
    flex: none;
  }

  .li {
    height: 17px;
    line-height: 17px;
    padding-left: 2px;
    white-space: nowrap;
  }

  .li.on {
    background: #3399ff;
    color: #fff;
  }

  .sb {
    flex: 1;
    display: flex;
    flex-direction: column;
    align-items: center;
    background: linear-gradient(90deg, #f4f4f4, #fff);
  }

  .sb-up,
  .sb-dn {
    height: 19px;
    position: relative;
    width: 100%;
    flex: none;
  }

  .sb-dn {
    margin-top: auto;
  }

  .sb-up::after,
  .sb-dn::after {
    content: "";
    position: absolute;
    left: 5px;
    top: 7px;
    border: 3.500px solid transparent;
  }

  .sb-up::after {
    border-bottom: 4px solid #222;
    border-top: 0;
  }

  .sb-dn::after {
    border-top: 4px solid #222;
    border-bottom: 0;
  }

  .sb-thumb {
    width: 14px;
    height: 53px;
    box-sizing: border-box;
    border: 1px solid #9a9a9a;
    border-radius: 3px;
    background: linear-gradient(90deg, #f0f0f0, #c4c4c4);
    display: flex;
    flex-direction: column;
    justify-content: center;
    align-items: center;
    gap: 1px;
  }

  .sb-thumb i {
    width: 7px;
    height: 1px;
    background: #777;
    box-shadow: 0 1px #eee;
  }

  .val {
    height: 16px;
    line-height: 16px;
    margin-top: 3px;
  }

  .v1 {
    padding-left: 10px;
  }

  .slider {
    height: 20px;
    position: relative;
    margin-top: 4px;
  }

  .slider::before {
    content: "";
    position: absolute;
    top: 9px;
    height: 2px;
    background: #aaa;
    box-shadow: 0 1px #fff;
  }

  .s1::before {
    left: 14px;
    width: 286px;
  }

  .s2::before {
    left: 8px;
    width: 289px;
  }

  .thumb {
    position: absolute;
    top: 1px;
    width: 10px;
    height: 18px;
    box-sizing: border-box;
    border: 1px solid #4a6a8a;
    border-radius: 5px 5px 2px 2px;
    background: linear-gradient(#eef4fa, #d0e6f8 40%, #5cc0f4);
  }

  .s1 .thumb {
    left: 8px;
  }

  .s2 .thumb {
    left: 289px;
  }

  .ends {
    height: 16px;
    line-height: 16px;
    margin: 5px 0 0 5px;
    width: 303px;
    display: flex;
    justify-content: space-between;
  }

  .feed {
    height: 16px;
    line-height: 16px;
    margin-top: 6px;
  }

  .tabs {
    margin-top: 4px;
    height: 25px;
    display: flex;
    align-items: flex-end;
    position: relative;
    z-index: 1;
  }

  .tab {
    height: 22px;
    box-sizing: border-box;
    border: 1px solid #777;
    border-bottom: 1px solid #777;
    border-radius: 4px 4px 0 0;
    background: linear-gradient(#f2f2f2, #e4e4e4 50%, #c8c8c8);
    text-align: center;
    line-height: 23px;
    margin-bottom: 1px;
  }

  .tab.on {
    height: 25px;
    background: #ebebeb;
    border-bottom: 0;
    margin-bottom: 0;
    line-height: 26px;
  }

  .t0 {
    width: 51px;
  }

  .t1 {
    width: 54px;
    margin-left: 1px;
  }

  .t2 {
    width: 54px;
    margin-left: 1px;
  }

  .t3 {
    width: 46px;
    margin-left: 2px;
  }

  .panel {
    width: 305px;
    height: 416px;
    margin-top: -1px;
    box-sizing: border-box;
    border: 1px solid #777;
    box-shadow: 2px 2px 3px #ccc;
    background: linear-gradient(#ebebeb 92%, #d8d8d8);
    padding: 9px 7px 0 5px;
    display: flex;
    flex-direction: column;
  }

  .lab {
    height: 16px;
    line-height: 18px;
    flex: none;
  }

  .line {
    display: flex;
    justify-content: space-between;
    align-items: center;
    flex: none;
  }

  .l1 {
    margin-top: 5px;
    height: 24px;
  }

  .c-a {
    width: 49px;
    height: 24px;
  }

  .c-b {
    width: 95px;
    height: 23px;
  }

  .c-a .combo-v,
  .c-b .combo-v {
    padding-left: 2px;
    font-size: 12px;
    margin-top: -1px;
  }

  .chk {
    display: flex;
    align-items: center;
    gap: 2px;
    height: 16px;
    color: #a6a6a6;
    flex: none;
  }

  .chk i {
    width: 16px;
    height: 16px;
    box-sizing: border-box;
    border: 1px solid #c0c0c0;
    border-radius: 3px;
    background: linear-gradient(#f0f0f0, #dcdcdc);
  }

  .c1 {
    margin-top: 5px;
  }

  .c2 {
    margin-top: 5px;
  }

  hr {
    width: 291px;
    height: 2px;
    margin: 5px 0 0;
    border: 0;
    background: linear-gradient(#c8c8c8 50%, #f8f8f8 50%);
    flex: none;
  }

  .f2 {
    margin-top: 4px;
  }

  .l2 {
    margin-top: 6px;
    height: 23px;
  }

  .l3 {
    margin-top: 3px;
    height: 22px;
  }

  .off {
    color: #a6a6a6;
  }

  .num {
    width: 81px;
    height: 22px;
    box-sizing: border-box;
    border: 1px solid #bbb;
    border-radius: 3px;
    background: #d0d0d0;
    color: #8c8c8c;
    text-align: right;
    padding-right: 7px;
    font-size: 14px;
    line-height: 20px;
  }

  button {
    font: inherit;
    padding: 0;
    box-sizing: border-box;
  }

  .wide {
    width: 290px;
    height: 27px;
    margin: 4px 0 0 1px;
    padding-bottom: 3px;
    border: 2px solid #6a6a6a;
    border-radius: 4px;
    background: linear-gradient(#f4f4f4, #e4e4e4 40%, #bcbcbc 48%, #dedede);
    color: #111;
    flex: none;
  }

  .speed {
    margin-top: 7px;
  }

  .v2 {
    margin-top: 7px;
    text-align: right;
    width: 304px;
  }

  .s2 {
    margin-top: 5px;
  }

  .e2 {
    margin-top: 3px;
  }

  .media {
    display: flex;
    gap: 4px;
    margin: 5px 0 0 37px;
  }

  .mb {
    width: 30px;
    height: 30px;
    border: 1px solid #6a6a6a;
    border-radius: 4px;
    background: linear-gradient(#f2f2f2, #e0e0e0 35%, #c0c0c0 45%, #e4e4e4);
    display: flex;
    align-items: center;
    justify-content: center;
    overflow: hidden;
  }

  .mb svg {
    flex: none;
  }

  .mb.dis {
    border-color: #bbb;
    background: linear-gradient(#f2f2f2, #e8e8e8);
  }

  .foot {
    width: 313px;
    margin: 7px 0 0 -3px;
  }

  .ok {
    display: flex;
    gap: 6px;
    margin: 5px 0 0 190px;
  }

  .okb {
    width: 53px;
    height: 30px;
    border: 1px solid #555;
    border-radius: 4px;
    background: linear-gradient(#fafafa, #e0e0e0);
  }

  .okb.green {
    width: 52px;
    border-color: #1a6a1a;
    border-width: 2px;
  }
</style>
